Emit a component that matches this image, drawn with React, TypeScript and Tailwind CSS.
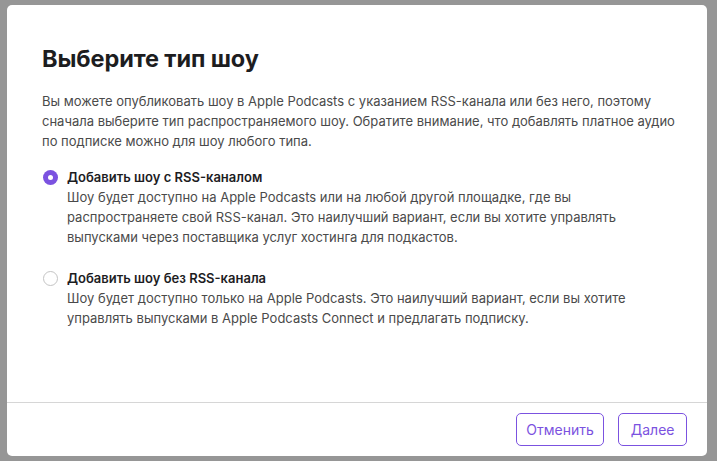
import React, { useState } from "react";

const options = [
  {
    id: "rss",
    title: "Добавить шоу с RSS-каналом",
    text: "Шоу будет доступно на Apple Podcasts или на любой другой площадке, где вы распространяете свой RSS-канал. Это наилучший вариант, если вы хотите управлять выпусками через поставщика услуг хостинга для подкастов.",
  },
  {
    id: "norss",
    title: "Добавить шоу без RSS-канала",
    text: "Шоу будет доступно только на Apple Podcasts. Это наилучший вариант, если вы хотите управлять выпусками в Apple Podcasts Connect и предлагать подписку.",
  },
];

const App = () => {
  const [selected, setSelected] = useState("rss");

  return (
    <div className="h-[461px] w-[717px] bg-[#969696] pt-[5px] pl-[7px] font-['Inter',sans-serif]">
      <div className="flex h-[451px] w-[700px] flex-col rounded-[5px] bg-white">
        {/* Body */}
        <div className="flex-1 pt-[40px] pl-[35px] pr-[30px]">
          <h1 className="text-[23.5px] leading-[28px] font-bold tracking-[-0.1px] text-[#1d1d1f]">
            Выберите тип шоу
          </h1>
          <p className="mt-[18px] text-[13px] leading-[20px] text-[#4a4a4a]">
            Вы можете опубликовать шоу в Apple Podcasts с указанием RSS-канала или без него, поэтому
            сначала выберите тип распространяемого шоу. Обратите внимание, что добавлять платное аудио
            по подписке можно для шоу любого типа.
          </p>

          {/* Options */}
          <div className="mt-[16px] flex flex-col gap-[21px]">
            {options.map((o) => (
              <label key={o.id} className="flex cursor-pointer gap-[9px]" onClick={() => setSelected(o.id)}>
                <span className="flex h-[20px] w-[16px] shrink-0 items-center justify-center">
                  {selected === o.id ? (
                    <span className="flex h-[15px] w-[15px] items-center justify-center rounded-full bg-[#7b52e0]">
                      <span className="h-[5px] w-[5px] rounded-full bg-white" />
                    </span>
                  ) : (
                    <span className="h-[15px] w-[15px] rounded-full border border-[#c4c4c4] bg-white" />
                  )}
                </span>
                <span className="flex flex-col">
                  <span className="text-[13px] leading-[20px] font-semibold text-[#1d1d1f]">{o.title}</span>
                  <span className="text-[13px] leading-[20px] text-[#4a4a4a]">{o.text}</span>
                </span>
              </label>
            ))}
          </div>
        </div>

        {/* Footer */}
        <div className="flex justify-end gap-[14px] border-t border-[#d6d6d6] pt-[10px] pr-[20px] pb-[10px]">
          <button className="h-[33px] rounded-[5px] border border-[#7b52e0] px-[9.5px] text-[14px] font-normal text-[#7b52e0]">
            Отменить
          </button>
          <button className="h-[33px] rounded-[5px] border border-[#7b52e0] px-[11.5px] text-[14px] font-normal text-[#7b52e0]">
            Далее
          </button>
        </div>
      </div>
    </div>
  );
};

export default App;
